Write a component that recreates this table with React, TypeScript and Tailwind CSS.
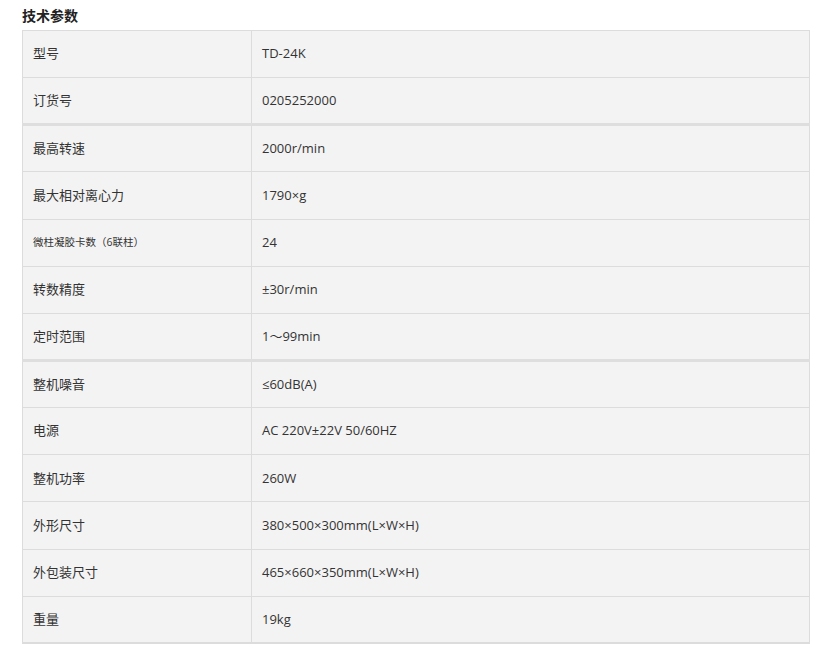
const specs: { label: string; value: string; small?: boolean; groupEnd?: boolean }[] = [
  { label: '型号', value: 'TD-24K' },
  { label: '订货号', value: '0205252000', groupEnd: true },
  { label: '最高转速', value: '2000r/min' },
  { label: '最大相对离心力', value: '1790×g' },
  { label: '微柱凝胶卡数（6联柱）', value: '24', small: true },
  { label: '转数精度', value: '±30r/min' },
  { label: '定时范围', value: '1～99min', groupEnd: true },
  { label: '整机噪音', value: '≤60dB(A)' },
  { label: '电源', value: 'AC 220V±22V 50/60HZ' },
  { label: '整机功率', value: '260W' },
  { label: '外形尺寸', value: '380×500×300mm(L×W×H)' },
  { label: '外包装尺寸', value: '465×660×350mm(L×W×H)' },
  { label: '重量', value: '19kg' },
];

export default function App() {
  return (
    <div
      className="min-h-[659px] w-[834px] bg-white text-[#333]"
      style={{ fontFamily: '"Open Sans", "Noto Sans CJK SC", sans-serif' }}
    >
      <div className="px-[22px] pt-[6px]">
        <h3 className="text-[14px] font-bold leading-[20px] text-[#222]">技术参数</h3>
        <table className="mt-[4px] w-[788px] border-collapse border-[1px] border-b-2 border-[#dcdcdc] bg-[#f3f3f3] text-[13px]">
          <tbody>
            {specs.map((row) => (
              <tr
                key={row.label}
                className={
                  row.groupEnd
                    ? 'h-[47.15px] border-b-[3px] border-[#dedede]'
                    : 'h-[47.15px] border-b border-[#dcdcdc]'
                }
              >
                <td
                  className={
                    row.small
                      ? 'w-[229px] border-r border-[#dcdcdc] pl-[10px] align-middle text-[10.5px]'
                      : 'w-[229px] border-r border-[#dcdcdc] pl-[10px] align-middle'
                  }
                >
                  {row.label}
                </td>
                <td className="pl-[10px] align-middle">{row.value}</td>
              </tr>
            ))}
          </tbody>
        </table>
      </div>
    </div>
  );
}
